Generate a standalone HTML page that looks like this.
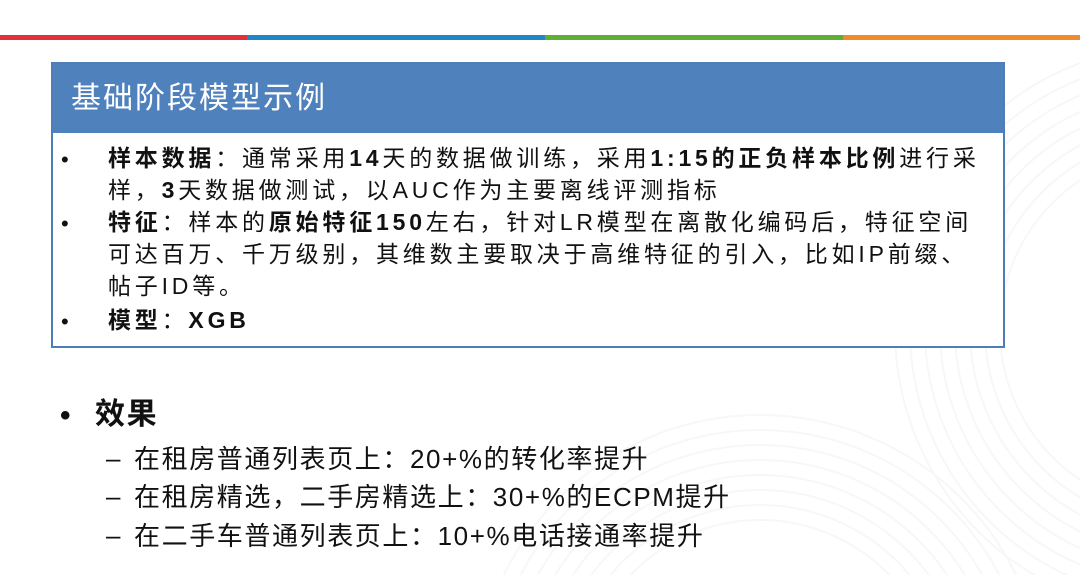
<!DOCTYPE html>
<html><head><meta charset="utf-8"><style>
html,body{margin:0;width:1080px;height:575px;overflow:hidden}
body{background:#fff;position:relative;font-family:"Liberation Sans","Noto Sans CJK SC",sans-serif;color:#111}
.bar{position:absolute;top:35px;height:5px}
.box{position:absolute;left:51px;top:62px;width:950px;height:282px;border:2px solid #4f7db8;background:#fff}
.hd{height:69px;background:#4f81bd;color:#fff;font-size:30px;letter-spacing:2px;line-height:69px;padding-left:18px}
.ln{position:absolute;left:55px;font-size:23px;letter-spacing:3.8px;line-height:32px;white-space:nowrap}
.bu{position:absolute;left:8px;font-size:22px;line-height:32px}
b{font-weight:bold}
.e{position:absolute;white-space:nowrap;font-size:26px;letter-spacing:1.6px;line-height:32px}
</style></head><body>
<svg style="position:absolute;left:0;top:0" width="1080" height="575">
<g fill="none" stroke="#f7f7f9" stroke-width="2">
<circle cx="1180" cy="330" r="180"/><circle cx="1180" cy="330" r="195"/><circle cx="1180" cy="330" r="210"/><circle cx="1180" cy="330" r="225"/><circle cx="1180" cy="330" r="240"/><circle cx="1180" cy="330" r="255"/><circle cx="1180" cy="330" r="270"/><circle cx="1180" cy="330" r="285"/>
<circle cx="760" cy="700" r="180"/><circle cx="760" cy="700" r="195"/><circle cx="760" cy="700" r="210"/><circle cx="760" cy="700" r="225"/><circle cx="760" cy="700" r="240"/><circle cx="760" cy="700" r="255"/><circle cx="760" cy="700" r="270"/><circle cx="760" cy="700" r="285"/>
</g></svg>
<div class="bar" style="left:0;width:247px;background:#e2303a"></div>
<div class="bar" style="left:247px;width:298px;background:#1f87c8"></div>
<div class="bar" style="left:545px;width:298px;background:#5fae35"></div>
<div class="bar" style="left:843px;width:237px;background:#f08a2a"></div>
<div class="box">
<div class="hd">基础阶段模型示例</div>
<div class="bu" style="top:80px">•</div>
<div class="ln" style="top:78px"><b>样本数据</b>：通常采用<b>14</b>天的数据做训练，采用<b>1:15</b><b>的正负样本比例</b>进行采</div>
<div class="ln" style="top:110px">样，<b>3</b>天数据做测试，以AUC作为主要离线评测指标</div>
<div class="bu" style="top:144px">•</div>
<div class="ln" style="top:142px"><b>特征</b>：样本的<b>原始特征150</b>左右，针对LR模型在离散化编码后，特征空间</div>
<div class="ln" style="top:174px">可达百万、千万级别，其维数主要取决于高维特征的引入，比如IP前缀、</div>
<div class="ln" style="top:206px">帖子ID等。</div>
<div class="bu" style="top:242px">•</div>
<div class="ln" style="top:240px"><b>模型</b>：<b>XGB</b></div>
</div>
<div class="e" style="left:60px;top:400px;font-size:30px;font-weight:bold">•</div>
<div class="e" style="left:95px;top:399px;font-size:30px;font-weight:bold">效果</div>
<div class="e" style="left:106px;top:442px">–</div>
<div class="e" style="left:134px;top:443px">在租房普通列表页上：20+%的转化率提升</div>
<div class="e" style="left:106px;top:480px">–</div>
<div class="e" style="left:134px;top:481px">在租房精选，二手房精选上：30+%的ECPM提升</div>
<div class="e" style="left:106px;top:519px">–</div>
<div class="e" style="left:134px;top:520px">在二手车普通列表页上：10+%电话接通率提升</div>
</body></html>
